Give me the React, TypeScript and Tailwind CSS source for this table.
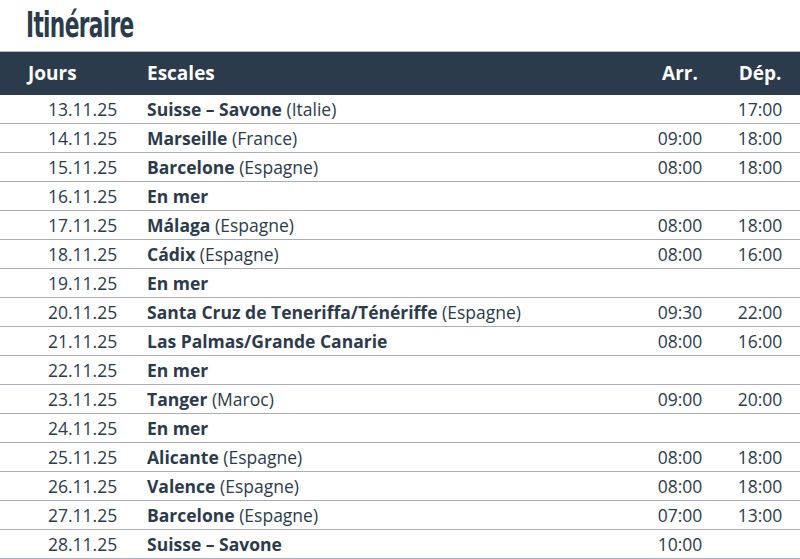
import React from 'react';

type Stop = { date: string; port: string; country?: string; arr?: string; dep?: string };

const stops: Stop[] = [
  { date: '13.11.25', port: 'Suisse – Savone', country: 'Italie', dep: '17:00' },
  { date: '14.11.25', port: 'Marseille', country: 'France', arr: '09:00', dep: '18:00' },
  { date: '15.11.25', port: 'Barcelone', country: 'Espagne', arr: '08:00', dep: '18:00' },
  { date: '16.11.25', port: 'En mer' },
  { date: '17.11.25', port: 'Málaga', country: 'Espagne', arr: '08:00', dep: '18:00' },
  { date: '18.11.25', port: 'Cádix', country: 'Espagne', arr: '08:00', dep: '16:00' },
  { date: '19.11.25', port: 'En mer' },
  { date: '20.11.25', port: 'Santa Cruz de Teneriffa/Ténériffe', country: 'Espagne', arr: '09:30', dep: '22:00' },
  { date: '21.11.25', port: 'Las Palmas/Grande Canarie', arr: '08:00', dep: '16:00' },
  { date: '22.11.25', port: 'En mer' },
  { date: '23.11.25', port: 'Tanger', country: 'Maroc', arr: '09:00', dep: '20:00' },
  { date: '24.11.25', port: 'En mer' },
  { date: '25.11.25', port: 'Alicante', country: 'Espagne', arr: '08:00', dep: '18:00' },
  { date: '26.11.25', port: 'Valence', country: 'Espagne', arr: '08:00', dep: '18:00' },
  { date: '27.11.25', port: 'Barcelone', country: 'Espagne', arr: '07:00', dep: '13:00' },
  { date: '28.11.25', port: 'Suisse – Savone', arr: '10:00' },
];

const App: React.FC = () => {
  return (
    <div className="w-[800px] h-[559px] overflow-hidden bg-white text-[#2c3b4c] font-['Open_Sans',sans-serif]">
      {/* Title */}
      <div className="h-[51px] pl-[26px] pt-[5px]">
        <h1 className="inline-block font-['DejaVu_Sans_Condensed',sans-serif] font-bold text-[36px] leading-[40px] tracking-[-1px] text-[#2c3b4c] origin-left scale-x-[0.67]">
          Itinéraire
        </h1>
      </div>

      {/* Header */}
      <div className="flex items-center h-[44px] bg-[#2c3b4c] border-t border-[#b9bdc2] text-white font-bold text-[19px]">
        <div className="w-[147px] pl-[28px]">Jours</div>
        <div className="flex-1">Escales</div>
        <div className="w-[80px] text-center">Arr.</div>
        <div className="w-[80px] text-center">Dép.</div>
      </div>

      {/* Rows */}
      {stops.map((s) => (
        <div key={s.date} className="flex items-center h-[29px] border-b border-[#a9aeb4] text-[17.5px]">
          <div className="w-[147px] pl-[48px]">{s.date}</div>
          <div className="flex-1">
            <span className="font-bold">{s.port}</span>
            {s.country && <span> ({s.country})</span>}
          </div>
          <div className="w-[80px] text-center">{s.arr}</div>
          <div className="w-[80px] text-center">{s.dep}</div>
        </div>
      ))}
    </div>
  );
};

export default App;
